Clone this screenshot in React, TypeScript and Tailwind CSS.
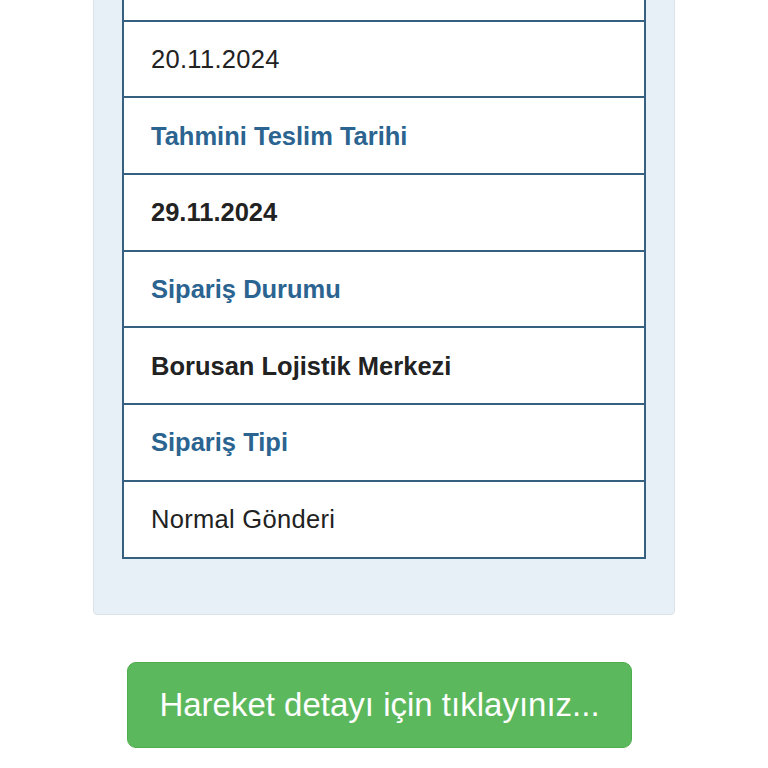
const rows = [
  { text: "", kind: "label" },
  { text: "20.11.2024", kind: "plain" },
  { text: "Tahmini Teslim Tarihi", kind: "label" },
  { text: "29.11.2024", kind: "bold" },
  { text: "Sipariş Durumu", kind: "label" },
  { text: "Borusan Lojistik Merkezi", kind: "bold" },
  { text: "Sipariş Tipi", kind: "label" },
  { text: "Normal Gönderi", kind: "plain" },
];

const App = () => {
  return (
    <div className="min-h-[768px] w-full overflow-hidden bg-white" style={{ fontFamily: "'Liberation Sans', Arial, sans-serif" }}>
      <div className="-mt-[78px] mx-[93px] rounded-b-[4px] border border-[#dbe3ea] bg-[#e8f0f7] px-[28px] pt-[20px] pb-[55px]">
        <div className="border-2 border-b-0 border-[#35607f] bg-white">
          {rows.map((row, i) => (
            <div
              key={i}
              className={`flex h-[76.7px] items-center border-b-2 border-[#35607f] pl-[27px] text-[25.5px] ${
                row.kind === "label"
                  ? "font-bold text-[#2b6490]"
                  : row.kind === "bold"
                  ? "font-bold text-[#222]"
                  : "tracking-[0.3px] text-[#222]"
              }`}
            >
              {row.text}
            </div>
          ))}
        </div>
      </div>
      <div className="mt-[47px] flex justify-center pr-[9px]">
        <button className="h-[86px] w-[505px] rounded-[9px] border border-[#4cae4c] bg-[#5cb85c] text-[33px] text-white">
          Hareket detayı için tıklayınız...
        </button>
      </div>
    </div>
  );
};

export default App;
